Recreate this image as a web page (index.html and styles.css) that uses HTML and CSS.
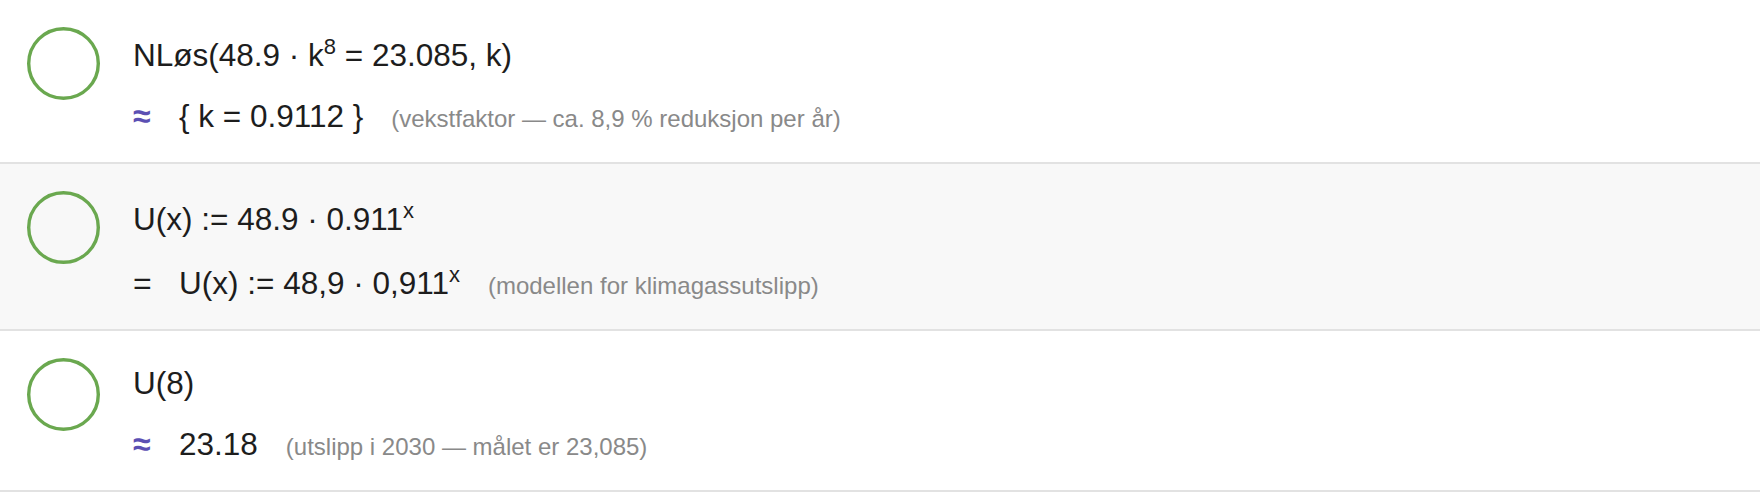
FILE: index.html
```html
<!DOCTYPE html>
<html lang="no">
<head>
<meta charset="utf-8">
<title>CAS</title>
<link rel="stylesheet" href="styles.css">
</head>
<body>
<div class="cas">
  <div class="row">
    <svg class="marker" width="73" height="73" viewBox="0 0 73 73"><circle cx="36.5" cy="36.5" r="34.8" fill="none" stroke="#6aa84f" stroke-width="3.4"/></svg>
    <div class="cell">
      <div class="line">NLøs(48.9 · k<sup>8</sup> = 23.085, k)</div>
      <div class="line out"><span class="sym approx">≈</span><span class="value">{ k = 0.9112 }</span><span class="note">(vekstfaktor — ca. 8,9 % reduksjon per år)</span></div>
    </div>
  </div>
  <div class="row row-alt">
    <svg class="marker" width="73" height="73" viewBox="0 0 73 73"><circle cx="36.5" cy="36.5" r="34.8" fill="none" stroke="#6aa84f" stroke-width="3.4"/></svg>
    <div class="cell">
      <div class="line">U(x) := 48.9 · 0.911<sup>x</sup></div>
      <div class="line out"><span class="sym">=</span><span class="value">U(x) := 48,9 · 0,911<sup>x</sup></span><span class="note">(modellen for klimagassutslipp)</span></div>
    </div>
  </div>
  <div class="row">
    <svg class="marker" width="73" height="73" viewBox="0 0 73 73"><circle cx="36.5" cy="36.5" r="34.8" fill="none" stroke="#6aa84f" stroke-width="3.4"/></svg>
    <div class="cell">
      <div class="line">U(8)</div>
      <div class="line out"><span class="sym approx">≈</span><span class="value">23.18</span><span class="note">(utslipp i 2030 — målet er 23,085)</span></div>
    </div>
  </div>
</div>
</body>
</html>
```

FILE: styles.css
```css
html, body {
  margin: 0;
  padding: 0;
  background: #ffffff;
}

body {
  font-family: "Liberation Sans", Arial, Helvetica, sans-serif;
  color: #1d1d1d;
}

.cas {
  width: 100%;
}

.row {
  display: flex;
  align-items: flex-start;
  gap: 33px;
  padding: 27px 0 0 27px;
  border-bottom: 2px solid #e2e2e2;
  background: #ffffff;
}

.row-alt {
  background: #f8f8f8;
}

.marker {
  flex: 0 0 auto;
  display: block;
}

.cell {
  display: flex;
  flex-direction: column;
  gap: 21px;
  padding: 5px 0 23px 0;
}

.line {
  font-size: 31.5px;
  line-height: 40px;
  white-space: nowrap;
}

.line sup {
  font-size: 22px;
  line-height: 29px;
  vertical-align: 12px;
}

.out {
  display: flex;
  align-items: baseline;
}

.sym {
  display: inline-block;
  width: 46px;
  flex: 0 0 46px;
  font-size: 32px;
}

.approx {
  color: #5b4fb3;
  font-weight: bold;
}

.note {
  margin-left: 28px;
  font-size: 24px;
  color: #898989;
}
```
